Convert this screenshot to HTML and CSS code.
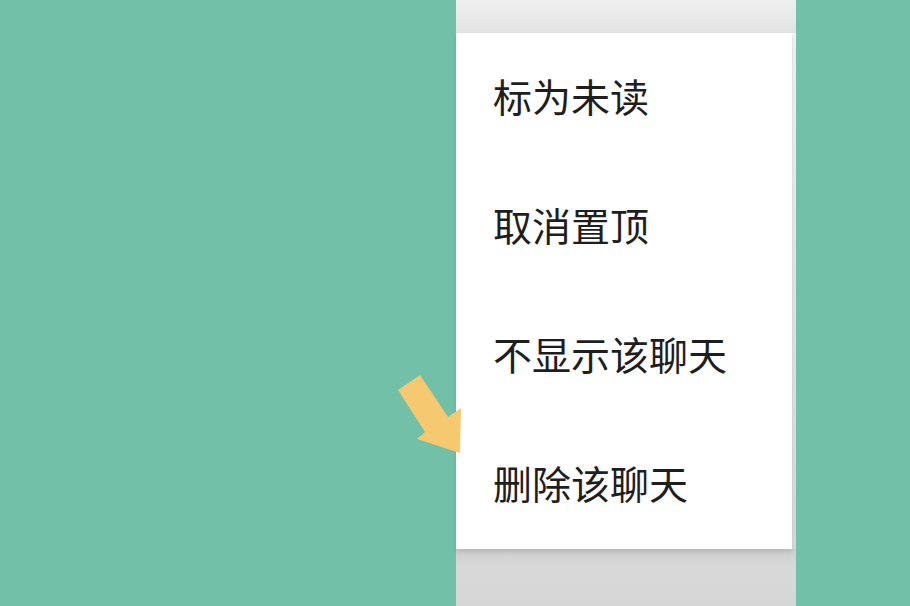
FILE: index.html
```html
<!DOCTYPE html>
<html lang="zh">
<head>
<meta charset="utf-8">
<link rel="stylesheet" href="styles.css">
</head>
<body>
<div class="stage">
  <div class="left"></div>
  <div class="phone">
    <div class="topbar"></div>
    <div class="row">
      <ul class="menu">
        <li class="item">标为未读</li>
        <li class="item">取消置顶</li>
        <li class="item">不显示该聊天</li>
        <li class="item">删除该聊天</li>
      </ul>
      <div class="edge"></div>
    </div>
    <div class="bottom"></div>
  </div>
  <div class="right"></div>
  <svg class="arrow" width="80" height="90" viewBox="0 0 80 90">
    <polygon fill="#f6c86f" points="8,20 30,5 58,47 71,38 70,83 27,69 35,62"/>
  </svg>
</div>
</body>
</html>
```

FILE: styles.css
```css
html, body {
  margin: 0;
  padding: 0;
}
body {
  width: 910px;
  height: 606px;
  overflow: hidden;
  background: #73c0a9;
  font-family: "Noto Sans CJK SC", "Noto Sans", sans-serif;
}
.stage {
  position: relative;
  display: flex;
  width: 910px;
  height: 606px;
}
.left {
  width: 456px;
  flex: none;
}
.right {
  flex: 1;
}
.phone {
  width: 340px;
  flex: none;
  display: flex;
  flex-direction: column;
  background: #d6d6d6;
}
.topbar {
  height: 33px;
  background: linear-gradient(#efefef, #e3e3e3);
  flex: none;
}
.row {
  display: flex;
  height: 516px;
  flex: none;
}
.menu {
  list-style: none;
  margin: 0;
  padding: 0;
  width: 336px;
  background: #ffffff;
  box-shadow: 0 3px 5px rgba(0, 0, 0, 0.12);
  position: relative;
  z-index: 1;
}
.item {
  height: 129px;
  display: flex;
  align-items: center;
  padding-left: 37px;
  font-size: 39px;
  color: #1e1e1e;
  line-height: 1;
  padding-bottom: 5px;
  box-sizing: border-box;
}
.edge {
  flex: 1;
  background: linear-gradient(#f3f3f3, #e2e2e2 60%, #d9d9d9);
}
.bottom {
  flex: 1;
  background: linear-gradient(#cfcfcf, #d8d8d8 30%, #d6d6d6);
}
.arrow {
  position: absolute;
  left: 390px;
  top: 370px;
  z-index: 2;
}
```
